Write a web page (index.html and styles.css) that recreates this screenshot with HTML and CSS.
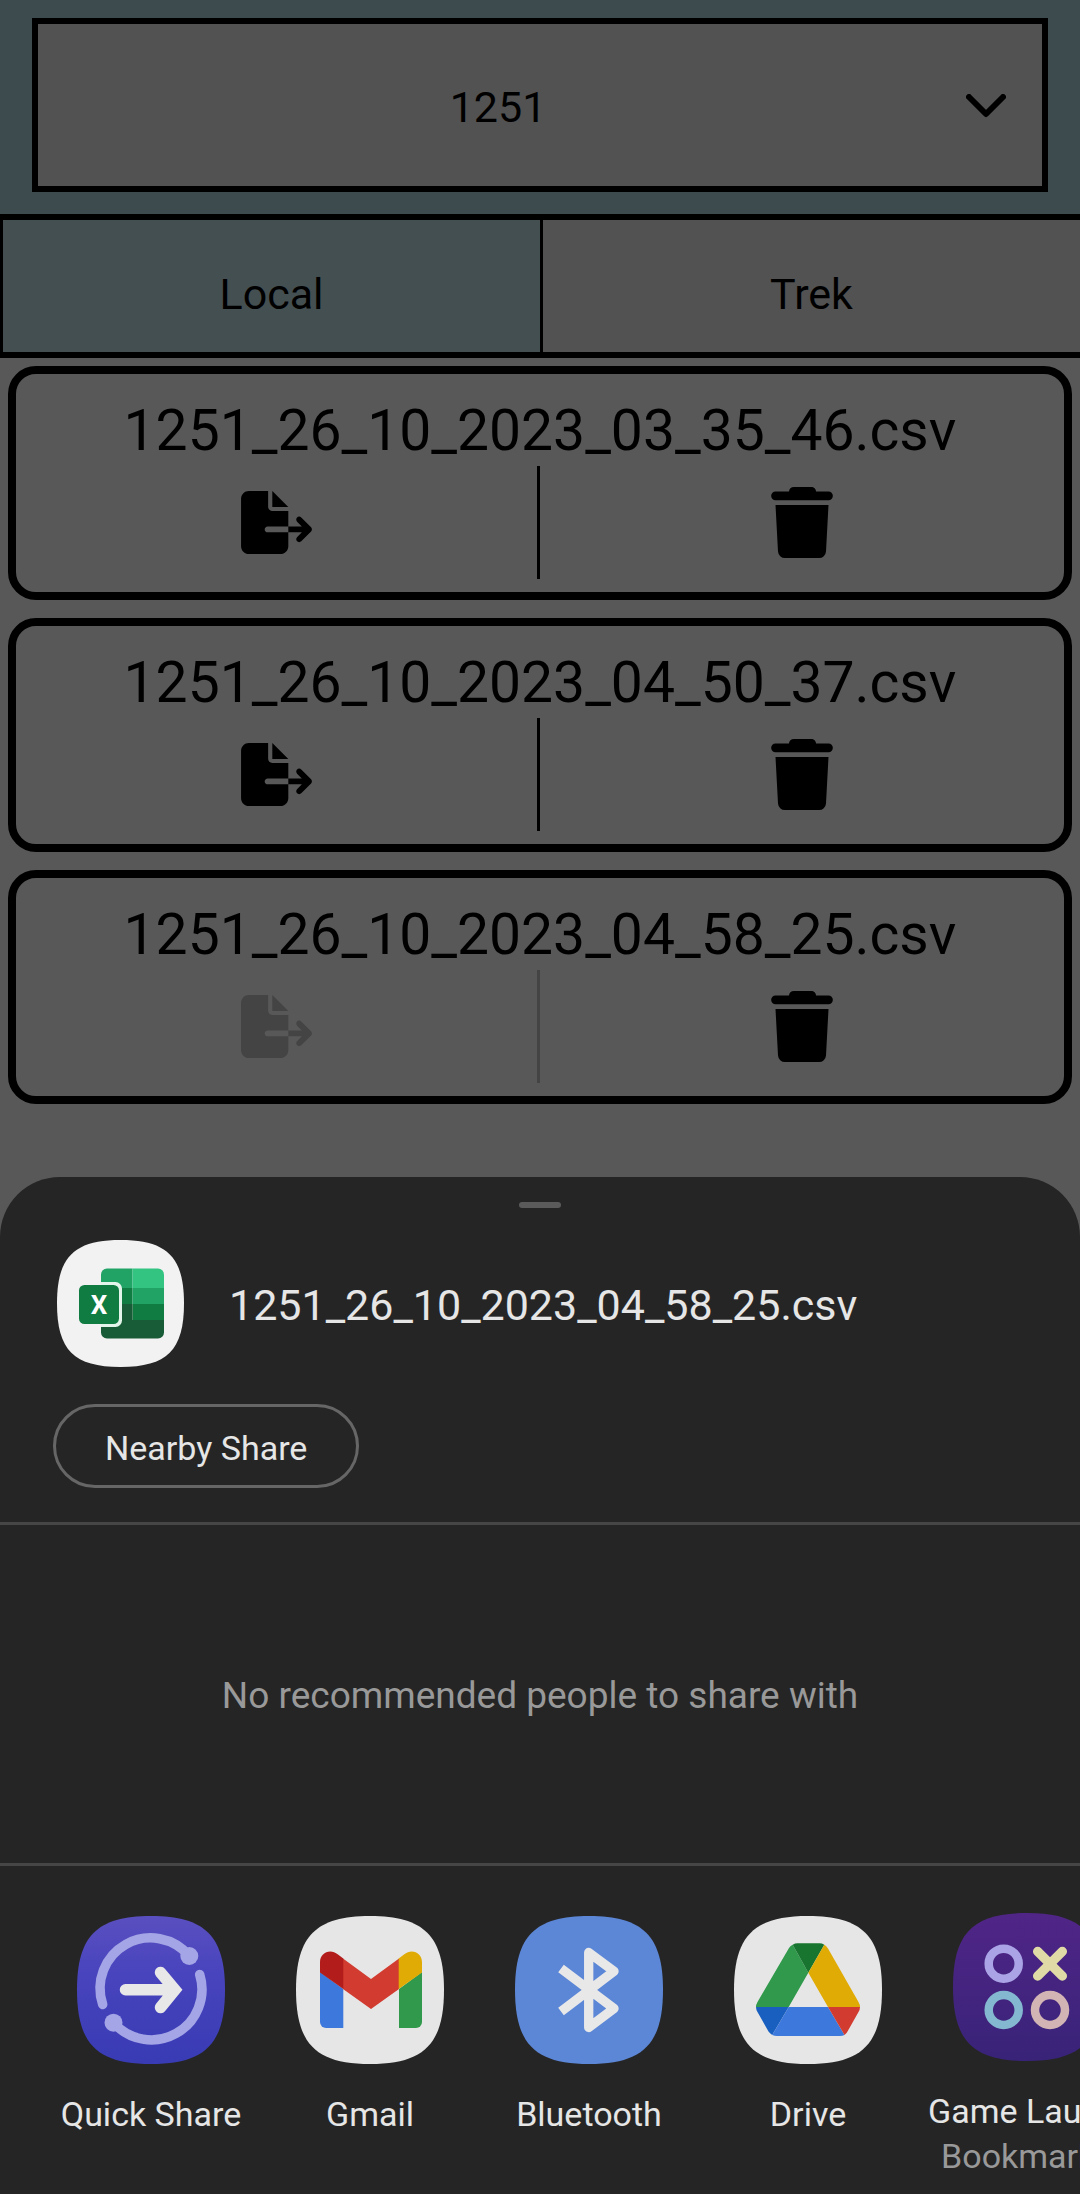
FILE: index.html
```html
<!DOCTYPE html>
<html lang="en">
<head>
<meta charset="utf-8">
<meta name="viewport" content="width=device-width, initial-scale=1">
<title>Files</title>
<link rel="stylesheet" href="styles.css">
</head>
<body>
<svg class="defs" width="0" height="0" aria-hidden="true">
  <defs>
    <symbol id="export" viewBox="0 0 576 512"><path fill="currentColor" d="M0 64C0 28.700 28.700 0 64 0H220V128c0 18 14 34 34 34H384V288H216c-13 0-24 11-24 24s11 24 24 24H384V448c0 35-29 64-64 64H64c-35 0-64-29-64-64V64zM384 336V288H494l-39-39c-9-9-9-25 0-34s25-9 34 0l80 80c9 9 9 25 0 34l-80 80c-9 9-25 9-34 0s-9-25 0-34l39-39H384zm0-206H254V0L384 130z"/></symbol>
    <symbol id="trash" viewBox="0 0 62 71"><path fill="currentColor" d="M18 4.500C18 2 20 0 23 0H40C43 0 45 2 45 4.500H57.500a4.300 4.300 0 0 1 0 8.700H4.500a4.300 4.300 0 0 1 0-8.700ZM4.500 18H57.500L55 64.500A7 7 0 0 1 48 71H14A7 7 0 0 1 7 64.500Z"/></symbol>
    <path id="tile" d="M0 74C0 20 20 0 74 0S148 20 148 74 128 148 74 148 0 128 0 74Z"/>
    <linearGradient id="quick" x1="0" y1="0" x2="0" y2="1"><stop offset="0" stop-color="#5a4fc0"/><stop offset="0.400" stop-color="#4844bd"/><stop offset="1" stop-color="#383bb4"/></linearGradient>
    <linearGradient id="game" x1="0" y1="0" x2="0" y2="1"><stop offset="0" stop-color="#502587"/><stop offset="1" stop-color="#382378"/></linearGradient>
  </defs>
</svg>

<header class="topbar">
  <div class="picker">
    <select class="picker-select" aria-label="Device"><option>1251</option></select>
    <svg class="picker-chevron" viewBox="0 0 40 24" aria-hidden="true"><path d="M3 3L20 20L37 3" fill="none" stroke="currentColor" stroke-width="6" stroke-linecap="round" stroke-linejoin="round"/></svg>
  </div>
</header>

<div class="tabs" role="tablist">
  <button class="tab tab-active" role="tab" aria-selected="true"><span class="tab-label">Local</span></button>
  <button class="tab" role="tab" aria-selected="false"><span class="tab-label">Trek</span></button>
</div>

<main class="files">
  <article class="file">
    <h2 class="file-name">1251_26_10_2023_03_35_46.csv</h2>
    <div class="file-actions">
      <button class="action action-export" aria-label="Export"><svg class="icon-export"><use href="#export"/></svg></button>
      <button class="action" aria-label="Delete"><svg class="icon-trash"><use href="#trash"/></svg></button>
    </div>
  </article>
  <article class="file">
    <h2 class="file-name">1251_26_10_2023_04_50_37.csv</h2>
    <div class="file-actions">
      <button class="action action-export" aria-label="Export"><svg class="icon-export"><use href="#export"/></svg></button>
      <button class="action" aria-label="Delete"><svg class="icon-trash"><use href="#trash"/></svg></button>
    </div>
  </article>
  <article class="file">
    <h2 class="file-name">1251_26_10_2023_04_58_25.csv</h2>
    <div class="file-actions">
      <button class="action action-export" aria-label="Export" disabled><svg class="icon-export"><use href="#export"/></svg></button>
      <button class="action" aria-label="Delete"><svg class="icon-trash"><use href="#trash"/></svg></button>
    </div>
  </article>
</main>

<section class="sheet" aria-label="Share">
  <div class="handle"></div>
  <div class="shared-file">
    <svg class="shared-icon" viewBox="0 0 127 127" aria-hidden="true">
      <path fill="#f2f2f2" d="M0 63.500C0 17 17 0 63.500 0S127 17 127 63.500 110 127 63.500 127 0 110 0 63.500Z"/>
      <path fill="#21a366" d="M50 28.500H75.500V48H44V34.500a6 6 0 0 1 6-6Z"/>
      <path fill="#33c481" d="M75.500 28.500H101a6 6 0 0 1 6 6V48H75.500Z"/>
      <path fill="#107c41" d="M44 48H75.500V64H44ZM75.500 64H107V80H75.500Z"/>
      <path fill="#21a366" d="M75.500 48H107V64H75.500Z"/>
      <path fill="#185c37" d="M44 64H75.500V80H107V92.500a6 6 0 0 1-6 6H50a6 6 0 0 1-6-6Z"/>
      <path fill="#e3f5ea" d="M44 42H58.500a6.500 6.500 0 0 1 6.500 6.500V80.500a6.500 6.500 0 0 1-6.500 6.500H44Z"/>
      <rect x="22" y="45" width="40" height="39" rx="5.500" fill="#107c41"/>
      <text class="excel-letter" x="42" y="74" text-anchor="middle">X</text>
    </svg>
    <div class="shared-name">1251_26_10_2023_04_58_25.csv</div>
  </div>
  <button class="nearby">Nearby Share</button>
  <p class="people">No recommended people to share with</p>
  <div class="apps">
    <a class="app" href="#quick-share">
      <svg class="app-icon" viewBox="0 0 148 148" aria-hidden="true">
        <use href="#tile" fill="url(#quick)"/>
        <g fill="none" stroke="#a4a5e6" stroke-width="9.500" stroke-linecap="round">
          <path d="M112.300 40A50.500 50.500 0 0 0 25.700 88.500"/>
          <path d="M122.700 58.500A50.500 50.500 0 0 1 36.500 106.700"/>
        </g>
        <circle cx="112.300" cy="40" r="9" fill="#a4a5e6"/><circle cx="36.500" cy="106.700" r="9" fill="#a4a5e6"/>
        <path d="M48.500 73.700H96M83.500 56.500L98 73.700L83.500 91.500" fill="none" stroke="#e8e8e8" stroke-width="11.500" stroke-linecap="round"/>
      </svg>
      <span class="app-label">Quick Share</span>
    </a>
    <a class="app" href="#gmail">
      <svg class="app-icon" viewBox="0 0 148 148" aria-hidden="true">
        <use href="#tile" fill="#e6e6e6"/>
        <path fill="#3d79dc" d="M24 56L47.300 73V112H30a6 6 0 0 1-6-6Z"/>
        <path fill="#30994b" d="M126 56L103 73V112H120a6 6 0 0 0 6-6Z"/>
        <path fill="#d23c30" d="M47 42.500L75 63L103 42.500V73L75 93L47 73Z"/>
        <path fill="#b21d1b" d="M24 56.500V46C24 37 34 32 42 38.500L47.300 42.500V73Z"/>
        <path fill="#e1ab05" d="M126 56.500V46C126 37 116 32 108 38.500L102.700 42.500V73Z"/>
      </svg>
      <span class="app-label">Gmail</span>
    </a>
    <a class="app" href="#bluetooth">
      <svg class="app-icon" viewBox="0 0 148 148" aria-hidden="true">
        <use href="#tile" fill="#5c86d6"/>
        <path d="M46 52.500L99 92.500L73.700 111.500V36.500L99 55.200L46 95.500" fill="none" stroke="#e8e8e8" stroke-width="9.300" stroke-linejoin="round"/>
      </svg>
      <span class="app-label">Bluetooth</span>
    </a>
    <a class="app" href="#drive">
      <svg class="app-icon" viewBox="0 0 148 148" aria-hidden="true">
        <use href="#tile" fill="#e6e6e6"/>
        <path fill="#30994b" d="M22 91Q22 88.500 23.500 86L55 32Q56.500 29.800 58.700 28.700L74.300 56.700L54.700 91Z"/>
        <path fill="#17752f" d="M58.700 28.700Q61 27.300 63.500 27.300H85.500Q88 27.300 90.300 28.700L74.300 56.700Z"/>
        <path fill="#e1ab05" d="M90.300 28.700Q92.500 30 94 32.500L124.500 86Q126 88.500 126 91H94L74.300 56.700Z"/>
        <path fill="#185fbf" d="M22 91H54.700L38.200 119Q36 117.500 34.500 115.500L23.500 96Q22 93.500 22 91Z"/>
        <path fill="#3d79dc" d="M54.700 91H94L110.500 119Q108.500 120 106 120H43Q40.500 120 38.200 119Z"/>
        <path fill="#d23c30" d="M94 91H126Q126 93.500 124.500 96L113.500 115.500Q112.500 117.500 110.500 119Z"/>
      </svg>
      <span class="app-label">Drive</span>
    </a>
    <a class="app" href="#game-launcher">
      <svg class="app-icon" viewBox="0 0 148 148" aria-hidden="true">
        <use href="#tile" fill="url(#game)"/>
        <g fill="none" stroke-width="8.500">
          <circle cx="50.700" cy="50.700" r="15" stroke="#aaa4e6"/>
          <circle cx="50.700" cy="97" r="15" stroke="#84b8d0"/>
          <circle cx="97" cy="97" r="15" stroke="#d1b4b3"/>
          <path d="M84.700 38.500L109.300 63M109.300 38.500L84.700 63" stroke="#dfdaa6" stroke-width="9.500" stroke-linecap="round"/>
        </g>
      </svg>
      <span class="app-label">Game Launcher<small class="app-sub">Bookmarks</small></span>
    </a>
  </div>
</section>
</body>
</html>
```
FILE: styles.css
```css
* {
  box-sizing: border-box;
}

body {
  display: flex;
  flex-direction: column;
  min-height: 100vh;
  margin: 0;
  background: #585858;
  color: #000;
  font-family: Roboto, "Liberation Sans", sans-serif;
}

button,
select {
  margin: 0;
  padding: 0;
  border: 0;
  border-radius: 0;
  background: none;
  color: inherit;
  font: inherit;
}

.defs {
  position: absolute;
}

.topbar {
  padding: 18px 32px 22px;
  background: #3d4a4e;
}

.picker {
  display: grid;
  align-items: center;
  border: 6px solid #000;
  background: #525252;
}

.picker-select {
  grid-area: 1 / 1;
  width: 100%;
  height: 162px;
  padding: 3px 84px 0 0;
  appearance: none;
  font-size: 43px;
  text-align: center;
  text-align-last: center;
}

.picker-chevron {
  grid-area: 1 / 1;
  justify-self: end;
  width: 40px;
  height: 24px;
  margin: 2px 36px 0 0;
  pointer-events: none;
}

.tabs {
  display: grid;
  grid-template-columns: 1fr 1fr;
  border-top: 6px solid #000;
  border-bottom: 6px solid #000;
}

.tab {
  display: flex;
  align-items: center;
  justify-content: center;
  height: 132px;
  border-left: 3px solid #000;
  background: #525252;
  font-size: 43px;
}

.tab-active {
  background: #444f52;
}

.tab-label {
  height: 46px;
  line-height: 63px;
  overflow: hidden;
}

.files {
  display: flex;
  flex-direction: column;
  gap: 18px;
  padding: 8px 8px 73px;
}

.file {
  padding: 22px 0 13px;
  border: 8px solid #000;
  border-radius: 28px;
}

.file-name {
  margin: 0;
  font-size: 57px;
  font-weight: 400;
  line-height: 70px;
  text-align: center;
}

.file-actions {
  display: grid;
  grid-template-columns: 1fr 1fr;
}

.action {
  display: flex;
  align-items: center;
  justify-content: center;
  height: 113px;
}

.action-export {
  border-right: 3px solid currentColor;
}

.action:disabled {
  color: #444;
}

.icon-export {
  width: 71px;
  height: 63px;
}

.icon-trash {
  width: 62px;
  height: 71px;
}

.sheet {
  margin-top: auto;
  padding-top: 25px;
  overflow: hidden;
  border-radius: 60px 60px 0 0;
  background: #252525;
  color: #e6e6e6;
}

.handle {
  width: 42px;
  height: 6px;
  margin: 0 auto 32px;
  border-radius: 3px;
  background: #5b5b5b;
}

.shared-file {
  display: flex;
  align-items: center;
  gap: 45px;
  padding: 0 57px;
}

.shared-icon {
  flex: none;
  width: 127px;
  height: 127px;
}

.excel-letter {
  fill: #fff;
  font-size: 26px;
  font-weight: 700;
}

.shared-name {
  padding-top: 3px;
  font-size: 43px;
}

.nearby {
  display: block;
  height: 84px;
  margin: 37px 53px 34px;
  padding: 3px 49px 0;
  border: 3px solid #666;
  border-radius: 42px;
  font-size: 34px;
}

.people {
  display: flex;
  align-items: center;
  justify-content: center;
  min-height: 344px;
  margin: 0;
  padding-top: 3px;
  border-top: 3px solid #464646;
  border-bottom: 3px solid #464646;
  color: #999;
  font-size: 37px;
}

.apps {
  display: flex;
  align-items: center;
  gap: 21px;
  padding: 47px 0 15px 52px;
  overflow: hidden;
}

.app {
  display: flex;
  flex: none;
  flex-direction: column;
  align-items: center;
  gap: 28px;
  width: 198px;
  color: inherit;
  text-decoration: none;
}

.app-icon {
  width: 148px;
  height: 148px;
}

.app-label {
  max-width: 100%;
  min-height: 84px;
  overflow: hidden;
  font-size: 34px;
  line-height: 44px;
  text-overflow: ellipsis;
  white-space: nowrap;
}

.app-sub {
  display: block;
  color: #999;
  font-size: 34px;
  line-height: 46px;
  text-align: center;
}
```
